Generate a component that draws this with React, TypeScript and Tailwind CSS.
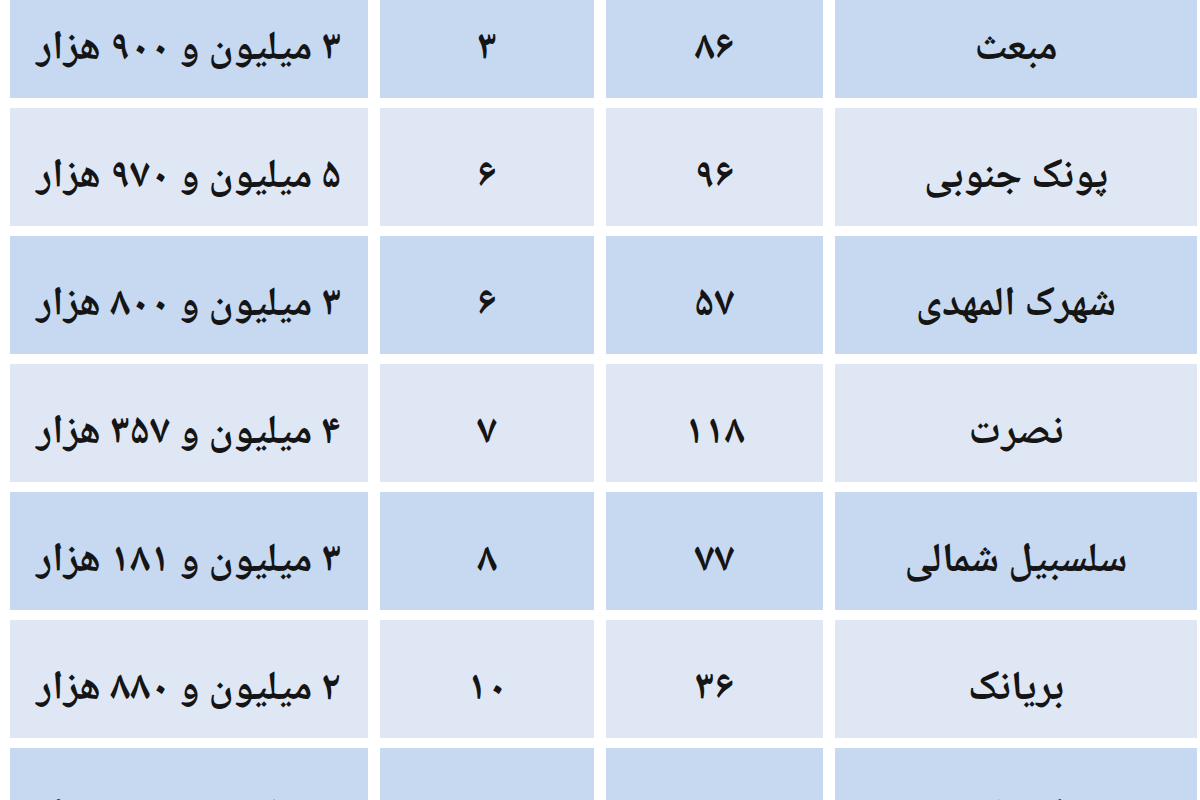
const rows = [
  { price: '۳ میلیون و ۹۰۰ هزار', count: '۳', area: '۸۶', name: 'مبعث' },
  { price: '۵ میلیون و ۹۷۰ هزار', count: '۶', area: '۹۶', name: 'پونک جنوبی' },
  { price: '۳ میلیون و ۸۰۰ هزار', count: '۶', area: '۵۷', name: 'شهرک المهدی' },
  { price: '۴ میلیون و ۳۵۷ هزار', count: '۷', area: '۱۱۸', name: 'نصرت' },
  { price: '۳ میلیون و ۱۸۱ هزار', count: '۸', area: '۷۷', name: 'سلسبیل شمالی' },
  { price: '۲ میلیون و ۸۸۰ هزار', count: '۱۰', area: '۳۶', name: 'بریانک' },
  { price: '۳ میلیون و ۱۴۰ هزار', count: '۱۱', area: '۱۲۷', name: 'شهرک ولیعصر' },
]

export default function App() {
  return (
    <div className="h-[800px] w-[1200px] overflow-hidden bg-white">
      <div
        dir="rtl"
        className="-mt-[20px] grid grid-cols-[362px_217px_214px_358px] gap-x-[12px] gap-y-[10px] pl-[10px] pr-[3px] font-['Noto_Naskh_Arabic','Noto_Sans_Arabic','DejaVu_Sans',sans-serif] text-[41px] font-bold text-[#151515]"
      >
        {rows.map((row, i) => {
          const bg = i % 2 === 0 ? 'bg-[#c6d9f1]' : 'bg-[#dfe7f5]'
          return [row.name, row.area, row.count, row.price].map((text, j) => (
            <div
              key={`${i}-${j}`}
              className={`flex h-[118px] items-center justify-center pt-[22px] leading-none ${bg}`}
            >
              {text}
            </div>
          ))
        })}
      </div>
    </div>
  )
}
